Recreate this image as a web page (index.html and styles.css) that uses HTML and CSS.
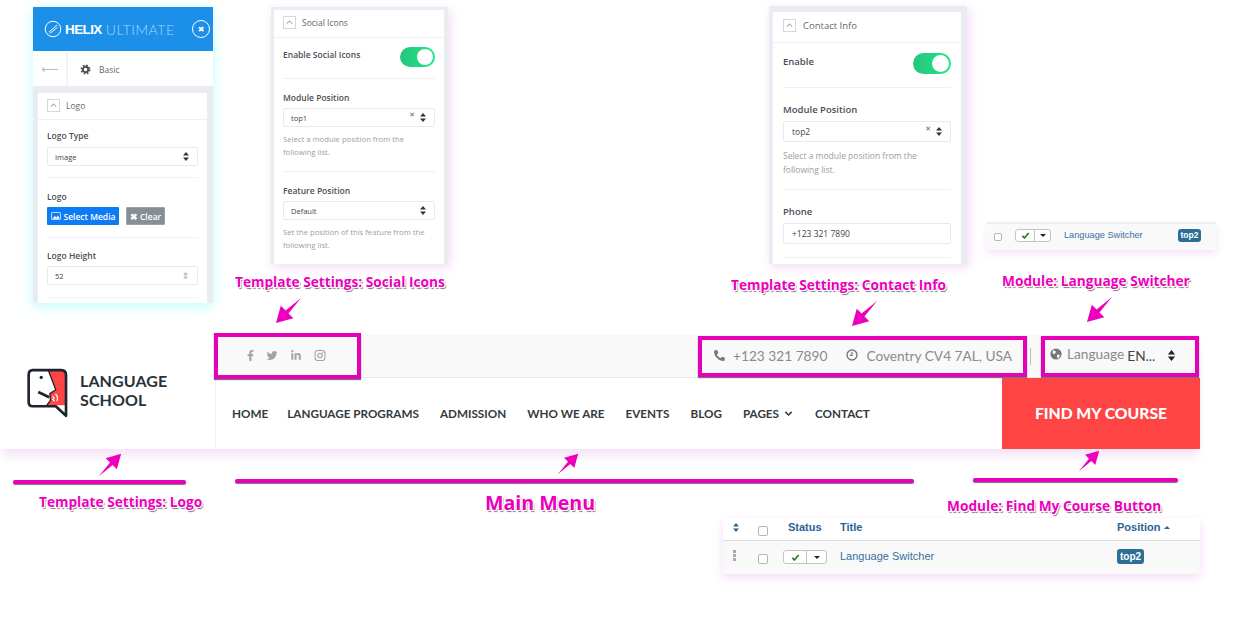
FILE: index.html
```html
<!DOCTYPE html>
<html lang="en">
<head>
<meta charset="utf-8">
<title>Language School header guide</title>
<link rel="stylesheet" href="styles.css">
</head>
<body>
<svg class="defs" width="0" height="0" aria-hidden="true">
  <symbol id="arrow" viewBox="0 0 28 28"><polygon points="1,27 14,11 9,6 27,1 22,19 17,14"/></symbol>
  <symbol id="updown" viewBox="0 0 8 12"><path d="M4 0 8 4.8H0ZM4 12 0 7.2H8Z"/></symbol>
  <symbol id="chev" viewBox="0 0 10 10"><path d="M2.5 6 5 3.6 7.5 6" fill="none" stroke="currentColor" stroke-width="1"/></symbol>
  <symbol id="check" viewBox="0 0 12 10"><path d="M1.5 5.5 4.5 8.5 10.5 1.5" fill="none" stroke="currentColor" stroke-width="2.4"/></symbol>
</svg>
<main class="canvas">

  <section class="panel panel-logo">
    <div class="helix-bar">
      <div class="helix-brand">
        <svg class="helix-mark" viewBox="0 0 20 20"><circle cx="10" cy="10" r="8.6" fill="none" stroke="#fff" stroke-width="1.1"/><path d="M5.5 13.5 14.5 5.5M6.5 15 15 8" stroke="#fff" stroke-width="1.1"/></svg>
        <b>HELIX</b><span>ULTIMATE</span>
      </div>
      <span class="helix-close">&#10006;</span>
    </div>
    <div class="helix-nav">
      <span class="helix-back">&#10229;</span>
      <span class="helix-crumb">
        <svg class="gear" viewBox="0 0 20 20"><circle cx="10" cy="10" r="5" fill="none" stroke="#4a4f55" stroke-width="3.4"/><circle cx="10" cy="10" r="7.6" fill="none" stroke="#4a4f55" stroke-width="3" stroke-dasharray="3 3"/></svg>
        Basic
      </span>
    </div>
    <div class="card card-logo">
      <div class="card-head"><span class="collapse"><svg><use href="#chev"/></svg></span>Logo</div>
      <div class="sec sec-l1">
        <label class="lbl">Logo Type</label>
        <div class="ctl">Image<svg class="updown"><use href="#updown"/></svg></div>
      </div>
      <div class="sec sec-l2">
        <label class="lbl">Logo</label>
        <div class="btns">
          <span class="btn btn-blue"><svg viewBox="0 0 12 10" class="pic"><rect x=".5" y=".5" width="11" height="9" rx="1" fill="none" stroke="#fff"/><path d="M1.5 8.5 4.5 5 6.5 7 8.5 4.5 10.5 8.5Z" fill="#fff"/></svg>Select Media</span>
          <span class="btn btn-grey">&#10006; Clear</span>
        </div>
      </div>
      <div class="sec sec-l3">
        <label class="lbl">Logo Height</label>
        <div class="ctl">52<span class="spin">&#8661;</span></div>
      </div>
    </div>
  </section>

  <section class="panel panel-social">
    <div class="card">
      <div class="card-head"><span class="collapse"><svg><use href="#chev"/></svg></span>Social Icons</div>
      <div class="sec sec-s1 row-between">
        <label class="lbl">Enable Social Icons</label>
        <span class="toggle"></span>
      </div>
      <div class="sec sec-s2">
        <label class="lbl">Module Position</label>
        <div class="ctl">top1<span class="ctl-end"><i>&#10005;</i><svg class="updown"><use href="#updown"/></svg></span></div>
        <p class="help">Select a module position from the following list.</p>
      </div>
      <div class="sec sec-s3">
        <label class="lbl">Feature Position</label>
        <div class="ctl">Default<svg class="updown"><use href="#updown"/></svg></div>
        <p class="help">Set the position of this feature from the following list.</p>
      </div>
    </div>
  </section>

  <section class="panel panel-contact">
    <div class="card">
      <div class="card-head"><span class="collapse"><svg><use href="#chev"/></svg></span>Contact Info</div>
      <div class="sec sec-c1 row-between">
        <label class="lbl">Enable</label>
        <span class="toggle"></span>
      </div>
      <div class="sec sec-c2">
        <label class="lbl">Module Position</label>
        <div class="ctl">top2<span class="ctl-end"><i>&#10005;</i><svg class="updown"><use href="#updown"/></svg></span></div>
        <p class="help">Select a module position from the following list.</p>
      </div>
      <div class="sec sec-c3">
        <label class="lbl">Phone</label>
        <div class="ctl">+123 321 7890</div>
      </div>
    </div>
  </section>

  <section class="strip">
    <span class="check-cell"><span class="box box-sm"></span></span>
    <span class="status status-sm"><span class="on"><svg><use href="#check"/></svg></span><span class="caret"></span></span>
    <a class="mod-link">Language Switcher</a>
    <span class="badge">top2</span>
  </section>

  <header class="site">
    <div class="brand">
      <svg class="logo" viewBox="0 0 130 150">
        <path d="M68 8H118V112H62L74 97 72 77 90 65Z" fill="#ff4444"/>
        <path d="M20 6H106Q121 6 121 21V144L90 115H20Q8 115 8 102V21Q8 6 20 6Z" fill="none" stroke="#1c2530" stroke-width="8" stroke-linejoin="round"/>
        <path d="M68 8 90 65 72 77 74 97 62 113" fill="none" stroke="#1c2530" stroke-width="4"/>
        <circle cx="46" cy="28" r="5" fill="#1c2530"/>
        <path d="M37 72 70 88" stroke="#1c2530" stroke-width="8"/>
        <path d="M80 85Q86 88 84 94M89 78Q99 87 93 100M79 93 86 100" fill="none" stroke="#fff" stroke-width="3.5"/>
      </svg>
      <div class="brand-name">LANGUAGE<br>SCHOOL</div>
    </div>
    <div class="site-main">
      <div class="topbar">
        <div class="socials">
          <svg class="soc soc-f" viewBox="0 0 320 512"><path d="M279.14 288l14.22-92.66h-88.91v-60.13c0-25.35 12.42-50.06 52.24-50.06h40.42V6.26S260.43 0 225.36 0c-73.22 0-121.08 44.38-121.08 124.72v70.62H22.89V288h81.39v224h100.17V288z"/></svg>
          <svg class="soc" viewBox="0 0 512 512"><path d="M459.37 151.716c.325 4.548.325 9.097.325 13.645 0 138.72-105.583 298.558-298.558 298.558-59.452 0-114.68-17.219-161.137-47.106 8.447.974 16.568 1.299 25.34 1.299 49.055 0 94.213-16.568 130.274-44.832-46.132-.975-84.792-31.188-98.112-72.772 6.498.974 12.995 1.624 19.818 1.624 9.421 0 18.843-1.3 27.614-3.573-48.081-9.747-84.143-51.98-84.143-102.985v-1.299c13.969 7.797 30.214 12.67 47.431 13.319-28.264-18.843-46.781-51.005-46.781-87.391 0-19.492 5.197-37.36 14.294-52.954 51.655 63.675 129.3 105.258 216.365 109.807-1.624-7.797-2.599-15.918-2.599-24.04 0-57.828 46.782-104.934 104.934-104.934 30.213 0 57.502 12.67 76.67 33.137 23.715-4.548 46.456-13.32 66.599-25.34-7.798 24.366-24.366 44.833-46.132 57.827 21.117-2.273 41.584-8.122 60.426-16.243-14.292 20.791-32.161 39.308-52.628 54.253z"/></svg>
          <svg class="soc" viewBox="0 0 448 512"><path d="M100.28 448H7.4V148.9h92.88zM53.79 108.1C24.09 108.1 0 83.5 0 53.8a53.79 53.79 0 0 1 107.58 0c0 29.7-24.1 54.3-53.79 54.3zM447.9 448h-92.68V302.4c0-34.7-.7-79.2-48.29-79.2-48.29 0-55.69 37.7-55.69 76.7V448h-92.78V148.9h89.08v40.8h1.3c12.4-23.5 42.69-48.3 87.88-48.3 94 0 111.28 61.9 111.28 142.3V448z"/></svg>
          <svg class="soc soc-i" viewBox="0 0 12 12"><rect x=".6" y=".6" width="10.8" height="10.8" rx="3" fill="none" stroke="#a3a3a3" stroke-width="1.1"/><circle cx="6" cy="6" r="2.5" fill="none" stroke="#a3a3a3" stroke-width="1.1"/><circle cx="9" cy="3" r=".7"/></svg>
        </div>
        <div class="contact">
          <svg class="ico" viewBox="0 0 512 512"><path transform="translate(512 0) scale(-1 1)" d="M493.4 24.6l-104-24c-11.3-2.6-22.9 3.3-27.5 13.9l-48 112c-4.2 9.8-1.4 21.3 6.9 28l60.6 49.6c-36 76.7-98.9 140.5-177.2 177.2l-49.6-60.6c-6.8-8.3-18.2-11.1-28-6.9l-112 48C3.9 366.5-2 378.1.6 389.4l24 104C27.1 504.2 36.7 512 48 512c256.1 0 464-207.5 464-464 0-11.2-7.7-20.9-18.6-23.4z"/></svg>
          <span class="contact-phone">+123 321 7890</span>
          <svg class="ico ico-clock" viewBox="0 0 12 12"><circle cx="6" cy="6" r="5" fill="none" stroke="#777" stroke-width="1.4"/><path d="M6 3V6.4H3.8" fill="none" stroke="#777" stroke-width="1.2"/></svg>
          <span>Coventry CV4 7AL, USA</span>
        </div>
        <span class="bar-sep"></span>
        <div class="lang">
          <svg class="ico ico-globe" viewBox="0 0 12 12"><circle cx="6" cy="6" r="5.6"/><path d="M3 2 6 3.5 5 6 2.5 5.5ZM7 6.5 10 7 8.5 10.5 7 9.5Z" fill="#f9f9f9"/></svg>
          <span class="lang-label">Language</span>
          <span class="lang-val">EN...</span>
          <svg class="updown updown-lang"><use href="#updown"/></svg>
        </div>
      </div>
      <nav class="menu">
        <a class="menu-home">HOME</a><a>LANGUAGE PROGRAMS</a><a>ADMISSION</a><a>WHO WE ARE</a><a>EVENTS</a><a>BLOG</a>
        <a class="has-sub">PAGES<svg viewBox="0 0 10 10" class="menu-chev"><path d="M1.5 3.2 5 6.7 8.5 3.2" fill="none" stroke="currentColor" stroke-width="1.7"/></svg></a>
        <a class="menu-contact">CONTACT</a>
        <a class="cta">FIND MY COURSE</a>
      </nav>
    </div>
  </header>

  <section class="table">
    <div class="t-row t-head">
      <span class="handle"><svg class="updown"><use href="#updown"/></svg></span>
      <span><span class="box"></span></span>
      <span class="t-status">Status</span>
      <span>Title</span>
      <span>Position <i class="sort-up"></i></span>
    </div>
    <div class="t-row t-body">
      <span class="handle grip"><i></i><i></i><i></i></span>
      <span><span class="box"></span></span>
      <span class="status"><span class="on"><svg><use href="#check"/></svg></span><span class="caret"></span></span>
      <a class="mod-link">Language Switcher</a>
      <span class="badge">top2</span>
    </div>
  </section>

  <div class="hl hl-social"></div>
  <div class="hl hl-contact"></div>
  <div class="hl hl-lang"></div>

  <div class="rule rule-logo"></div>
  <div class="rule rule-menu"></div>
  <div class="rule rule-course"></div>

  <svg class="arrow arrow-social"><use href="#arrow"/></svg>
  <svg class="arrow arrow-contact"><use href="#arrow"/></svg>
  <svg class="arrow arrow-lang"><use href="#arrow"/></svg>
  <svg class="arrow arrow-logo"><use href="#arrow"/></svg>
  <svg class="arrow arrow-menu"><use href="#arrow"/></svg>
  <svg class="arrow arrow-course"><use href="#arrow"/></svg>

  <div class="note note-social">Template Settings: Social Icons</div>
  <div class="note note-contact">Template Settings: Contact Info</div>
  <div class="note note-lang">Module: Language Switcher</div>
  <div class="note note-logo">Template Settings: Logo</div>
  <div class="note note-menu">Main Menu</div>
  <div class="note note-course">Module: Find My Course Button</div>
</main>
</body>
</html>
```
FILE: styles.css
```css
* { box-sizing: border-box; }
html, body { margin: 0; padding: 0; background: #fff; }
.defs { position: absolute; }
.canvas { position: relative; width: 1241px; height: 620px; overflow: hidden; font-family: "Open Sans", "Liberation Sans", sans-serif; color: #4a4f55; }
a { text-decoration: none; }

/* settings panels */
.panel { position: absolute; background: #e9edf2; }
.panel-logo { left: 33px; top: 7px; width: 180px; height: 296px; padding: 0; box-shadow: 0 3px 12px #bdfbff; }
.panel-social { left: 271px; top: 7px; width: 177px; height: 257px; padding: 3px 4px 0 3px; box-shadow: 2px 3px 10px #f5d8f6; }
.panel-contact { left: 769px; top: 6px; width: 198px; height: 258px; padding: 6px 6px 0 4px; box-shadow: 2px 3px 10px #f5d8f6; }

.helix-bar { height: 45px; background: #1c8fe8; border-bottom: 1px solid #fff; display: flex; align-items: center; justify-content: space-between; padding: 0 3px 0 11px; color: #fff; }
.helix-brand { display: flex; align-items: center; font-size: 13.5px; }
.helix-brand b { font-family: "Liberation Sans", sans-serif; font-weight: 700; margin-right: 4px; letter-spacing: -.6px; }
.helix-brand span { font-family: "Lato", sans-serif; font-weight: 300; color: #a7d6fa; font-size: 14px; letter-spacing: .5px; }
.helix-mark { width: 18px; height: 18px; margin-right: 3px; }
.helix-close { width: 18px; height: 18px; border: 1.5px solid #fff; border-radius: 50%; display: flex; align-items: center; justify-content: center; font-size: 8px; font-family: "DejaVu Sans", sans-serif; }
.helix-nav { height: 34px; background: #fff; display: flex; align-items: center; }
.helix-back { width: 35px; height: 100%; border-right: 2px solid #f1f3f6; display: flex; align-items: center; justify-content: center; font-family: "DejaVu Sans", sans-serif; font-size: 12px; color: #b5bac0; }
.helix-crumb { display: flex; align-items: center; gap: 8px; padding-left: 12px; font-size: 8.5px; color: #666; }
.gear { width: 11px; height: 11px; }

.card { background: #fff; height: 100%; }
.card-logo { margin: 7px 6px 0 5px; width: 169px; height: 210px; }
.card-head { height: 27px; border-bottom: 1px solid #eef0f3; display: flex; align-items: center; gap: 6px; padding: 0 0 1px 9px; font-size: 8.5px; color: #666; }
.panel-social .card-head { height: 28px; padding-bottom: 3px; }
.panel-contact .card-head { height: 31px; font-size: 9.5px; gap: 7px; padding: 0 0 3px 10px; }
.collapse { width: 13px; height: 13px; border: 1px solid #d3d8de; display: flex; }
.collapse svg { width: 100%; height: 100%; color: #aab0b7; }

.sec { padding: 0 9px; border-bottom: 1px solid transparent; position: relative; }
.sec::after { content: ""; position: absolute; left: 9px; right: 9px; bottom: -1px; height: 1px; background: #eff1f4; }
.panel-contact .sec { padding-left: 10px; padding-right: 10px; }
.panel-contact .sec::after { left: 10px; right: 10px; }
.lbl { display: block; font-size: 8.5px; line-height: 12px; font-weight: 600; color: #4a4f55; }
.ctl { height: 19px; margin-top: 5px; border: 1px solid #e7e9ed; border-radius: 2px; display: flex; align-items: center; justify-content: space-between; padding: 0 8px 0 7px; font-size: 7.5px; color: #444; }
.ctl-end { display: flex; align-items: center; gap: 5px; }
.ctl-end i { font-style: normal; font-size: 7px; color: #666; margin-top: -5px; font-family: "DejaVu Sans", sans-serif; }
.updown { width: 6px; height: 9px; fill: #333; display: block; }
.spin { font-size: 9px; color: #9aa; font-family: "DejaVu Sans", sans-serif; }
.help { margin: 6px 0 0; font-size: 7.7px; line-height: 12.5px; color: #9a9ea3; }
.row-between { display: flex; justify-content: space-between; align-items: flex-start; }
.toggle { width: 35px; height: 20px; border-radius: 10px; background: linear-gradient(90deg, #27c47f, #1fe884); position: relative; display: block; }
.toggle::after { content: ""; position: absolute; right: 2px; top: 2px; width: 16px; height: 16px; border-radius: 50%; background: #fff; }

.sec-l1 { padding-top: 10px; height: 58px; }
.sec-l2 { padding-top: 13px; height: 60px; }
.sec-l2 .btns { margin-top: 4px; }
.sec-l3 { padding-top: 12px; height: 60px; }
.sec-l3 .ctl { margin-top: 4px; }
.sec-s1 { padding-top: 9px; height: 41px; }
.sec-s1 .lbl { margin-top: 2px; }
.sec-s2 { padding-top: 13px; height: 93px; }
.sec-s2 .ctl { margin-top: 4px; }
.sec-s3 { padding-top: 13px; }
.sec-s3 .ctl { margin-top: 4px; }
.sec-s3::after { display: none; }
.panel-contact .lbl { font-size: 9.5px; line-height: 14px; }
.panel-contact .ctl { height: 21px; font-size: 8.5px; padding: 0 8px; margin-top: 4px; }
.panel-contact .help { font-size: 8.5px; line-height: 14px; margin-top: 7px; }
.panel-contact .toggle { width: 38px; height: 21px; border-radius: 11px; }
.panel-contact .toggle::after { width: 17px; height: 17px; }
.sec-c1 { padding-top: 10px; height: 45px; }
.sec-c1 .lbl { margin-top: 2px; }
.sec-c2 { padding-top: 15px; height: 102px; }
.sec-c3 { padding-top: 15px; height: 68px; }

.btns { display: flex; gap: 7px; margin-top: 5px; }
.btn { height: 18px; border-radius: 1px; color: #fff; font-size: 8.5px; font-weight: 600; display: flex; align-items: center; justify-content: center; gap: 3px; }
.btn-blue { width: 72px; background: #0d7bf5; }
.btn-grey { width: 39px; background: #878e95; border: 1px solid #9aa0a6; }
.pic { width: 10px; height: 8px; }

/* strip and table */
.status { display: inline-flex; width: 44px; height: 14px; border: 1px solid #c4c4c4; border-radius: 3px; background: #fff; }
.status .on { flex: 1; border-right: 1px solid #c4c4c4; display: flex; align-items: center; justify-content: center; color: #247d24; }
.status svg { width: 9px; height: 7px; display: block; }
.status .caret { width: 19px; display: flex; align-items: center; justify-content: center; }
.status .caret::after { content: ""; border: 3px solid transparent; border-top: 3px solid #222; border-bottom: 0; }
.status-sm { width: 36px; height: 13px; }
.status-sm .caret { width: 15px; }
.box { display: block; width: 10px; height: 10px; border: 1px solid #b5b5b5; border-radius: 2px; background: #fff; }
.box-sm { width: 8px; height: 8px; }
.mod-link { color: #3a6f9e; font-family: "Liberation Sans", sans-serif; }
.badge { background: #2b6f94; color: #fff; border-radius: 3px; font-family: "Liberation Sans", sans-serif; font-weight: 700; display: inline-block; text-align: center; }

.strip { position: absolute; left: 987px; top: 222px; width: 229px; height: 28px; background: #f9f9f9; border-top: 2px solid #eee; box-shadow: 0 4px 8px #f7e2f7; display: grid; grid-template-columns: 28px 49px 114px 1fr; align-items: center; font-size: 9.2px; }
.check-cell { padding-left: 7px; }
.strip .badge { font-size: 8.5px; width: 23px; height: 13px; line-height: 13px; margin-top: -3px; }
.strip .mod-link { margin-top: -5px; }
.strip .status { margin-top: -3px; }

.table { position: absolute; left: 723px; top: 518px; width: 477px; height: 56px; background: #fff; box-shadow: 0 4px 10px #f5dcf6; font-family: "Liberation Sans", sans-serif; }
.t-row { display: grid; grid-template-columns: 35px 25px 57px 277px 1fr; align-items: center; }
.t-head { height: 23px; color: #2a6496; font-size: 11px; font-weight: 700; border-bottom: 1px solid #ddd; padding-bottom: 5px; }
.t-status { padding-left: 5px; }
.t-body { height: 33px; background: #f9f9f9; font-size: 11px; }
.handle { padding-left: 10px; }
.t-head .updown { fill: #2a6496; margin-top: 0; }
.grip { display: flex; flex-direction: column; gap: 1px; margin-top: -4px; }
.grip i { width: 3px; height: 3px; background: #aaa; }
.sort-up { display: inline-block; border: 3px solid transparent; border-bottom: 3px solid #2a6496; border-top: 0; vertical-align: 2px; margin-left: 1px; }
.t-body .badge { width: 27px; height: 15px; font-size: 10px; line-height: 15px; justify-self: start; margin-top: -3px; }
.t-body .mod-link { margin-top: -3px; }
.t-body .status { margin-top: -1px; }
.t-body .box { margin-top: 3px; }
.t-head .box { margin-top: 8px; }

/* site header */
.site { position: absolute; left: 0; top: 335px; width: 1200px; height: 114px; display: flex; background: #fff; box-shadow: 0 8px 10px -2px #f5e0f6; }
.brand { width: 216px; border-right: 1px solid #f0f0f0; display: flex; align-items: flex-start; padding: 33px 0 0 26px; gap: 11px; }
.logo { width: 43px; height: 50px; flex: none; }
.brand-name { font-family: "Lato", sans-serif; font-size: 16px; line-height: 19px; font-weight: 700; color: #27323a; margin-top: 3px; letter-spacing: .1px; }
.site-main { flex: 1; display: flex; flex-direction: column; }
.topbar { height: 43px; background: #f9f9f9; border-bottom: 1px solid #e8e8e8; display: flex; align-items: center; color: #8a8a8a; font-family: "Lato", sans-serif; font-size: 13.7px; padding-bottom: 2px; }
.socials { display: flex; align-items: center; gap: 12px; padding-left: 31px; margin-right: auto; }
.soc { height: 11px; width: 12px; fill: #a3a3a3; display: block; }
.soc-f { width: 7px; }
.contact { display: flex; align-items: center; }
.ico { width: 11px; height: 11px; fill: #777; display: block; }
.contact-phone { margin: 0 19px 0 8px; }
.ico-clock { width: 12px; height: 12px; margin-right: 8px; }
.bar-sep { width: 1px; height: 17px; background: #bbb; margin: 2px 19px 0 18px; }
.lang { display: flex; align-items: center; width: 150px; padding-right: 24px; }
.ico-globe { margin-right: 5px; width: 12px; height: 12px; margin-top: -2px; }
.lang-label { margin-top: -3px; }
.lang-val { color: #444; margin-left: 3px; flex: 1; }
.updown-lang { width: 9px; height: 11px; fill: #222; }
.menu { flex: 1; display: flex; align-items: center; gap: 21px; padding: 0 0 0 16px; font-family: "Lato", sans-serif; font-weight: 700; font-size: 11.7px; color: #333a40; }
.menu > a { margin-bottom: 2px; }
.menu-home { margin-right: -2px; }
.menu-contact { margin-left: 1px; }
.has-sub { display: flex; align-items: center; gap: 5px; }
.menu-chev { width: 9px; height: 9px; margin-top: 2px; }
.menu > .cta { margin: 0 0 0 auto; align-self: stretch; width: 198px; background: #ff4444; color: #fff; font-size: 15.7px; font-weight: 900; display: flex; align-items: center; justify-content: center; padding-bottom: 2px; }

/* annotations */
.hl { position: absolute; border: 4px solid #e600b8; box-shadow: 0 1px 1px #777; }
.hl-social { left: 214px; top: 333px; width: 147px; height: 46px; }
.hl-contact { left: 698px; top: 336px; width: 329px; height: 41px; }
.hl-lang { left: 1041px; top: 336px; width: 158px; height: 41px; }
.rule { position: absolute; height: 4px; background: #e600b8; border-radius: 2px; box-shadow: 0 1px 1px #777; }
.rule-logo { left: 13px; top: 480px; width: 173px; }
.rule-menu { left: 235px; top: 479px; width: 679px; }
.rule-course { left: 973px; top: 478px; width: 205px; }
.arrow { position: absolute; width: 27px; height: 27px; fill: #ec00bd; }
.arrow-social { left: 275px; top: 297px; transform: rotate(180deg); }
.arrow-contact { left: 851px; top: 300px; transform: rotate(180deg); }
.arrow-lang { left: 1086px; top: 296px; transform: rotate(180deg); }
.arrow-logo { left: 98px; top: 453px; width: 24px; height: 24px; }
.arrow-menu { left: 557px; top: 453px; width: 22px; height: 22px; }
.arrow-course { left: 1078px; top: 450px; width: 22px; height: 22px; }
.note { position: absolute; color: #ec00bd; font-weight: 700; font-size: 13.7px; line-height: 18px; white-space: nowrap; text-shadow: 1px 1px 0 #fff, -1px -1px 0 #fff, 1px -1px 0 #fff, -1px 1px 0 #fff, 1.5px 2px 1px #777; }
.note-social { left: 235px; top: 273px; }
.note-contact { left: 731px; top: 276px; }
.note-lang { left: 1002px; top: 272px; }
.note-logo { left: 39px; top: 493px; }
.note-menu { left: 485px; top: 490px; font-size: 19.6px; line-height: 26px; }
.note-course { left: 947px; top: 497px; }
```
